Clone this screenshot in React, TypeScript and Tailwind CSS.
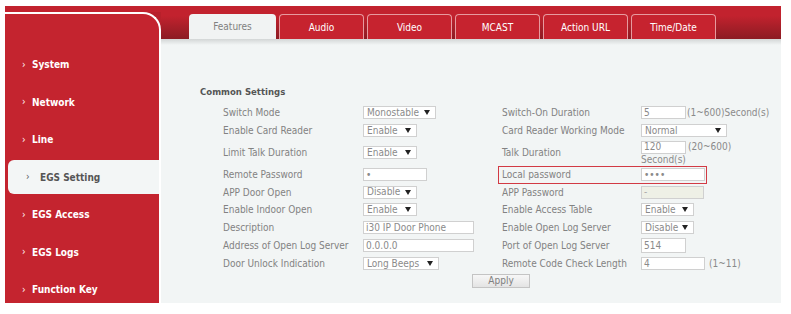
import React from 'react';

const font = "font-['DejaVu_Sans_Condensed','Liberation_Sans',sans-serif]";

const navItems = ['System', 'Network', 'Line', 'EGS Setting', 'EGS Access', 'EGS Logs', 'Function Key'];
const tabs = ['Features', 'Audio', 'Video', 'MCAST', 'Action URL', 'Time/Date'];

function Caret() {
  return (
    <svg width="6" height="5" viewBox="0 0 6 5" className="shrink-0">
      <path d="M0 0h6L3 5z" fill="#222" />
    </svg>
  );
}

function Select({ text, w }: { text: string; w: string }) {
  return (
    <div className={`${w} h-[13px] bg-white border border-[#d0d0d0] flex items-center justify-between pl-[3px] pr-[5px] text-[#8a8a8a]`}>
      <span className="leading-none">{text}</span>
      <Caret />
    </div>
  );
}

function Input({ text, w, disabled }: { text: string; w: string; disabled?: boolean }) {
  return (
    <div
      className={`${w} h-[13px] border border-[#d0d0d0] flex items-center pl-[2px] leading-none ${
        disabled ? 'bg-[#eef0e6] text-[#aaa]' : 'bg-white text-[#8a8a8a]'
      }`}
    >
      {text}
    </div>
  );
}

type Row = {
  h: string;
  l: string;
  lc: React.ReactNode;
  r: string;
  rc: React.ReactNode;
  boxed?: boolean;
  top?: boolean;
};

const rows: Row[] = [
  {
    h: 'h-[18px]',
    l: 'Switch Mode',
    lc: <Select text="Monostable" w="w-[73px]" />,
    r: 'Switch-On Duration',
    rc: (
      <div className="flex items-center">
        <Input text="5" w="w-[45px]" />
        <span className="ml-[1px] text-[#8a8a8a]">(1~600)Second(s)</span>
      </div>
    ),
  },
  {
    h: 'h-[18px]',
    l: 'Enable Card Reader',
    lc: <Select text="Enable" w="w-[54px]" />,
    r: 'Card Reader Working Mode',
    rc: <Select text="Normal" w="w-[86px]" />,
  },
  {
    h: 'h-[26px]',
    l: 'Limit Talk Duration',
    lc: <Select text="Enable" w="w-[54px]" />,
    r: 'Talk Duration',
    top: true,
    rc: (
      <div className="flex flex-col pt-[1px]">
        <div className="flex items-center">
          <Input text="120" w="w-[45px]" />
          <span className="ml-[2px] text-[#8a8a8a] leading-none">(20~600)</span>
        </div>
        <span className="text-[#8a8a8a] leading-[12px]">Second(s)</span>
      </div>
    ),
  },
  {
    h: 'h-[18px]',
    l: 'Remote Password',
    lc: <Input text="•" w="w-[64px]" />,
    r: 'Local password',
    boxed: true,
    rc: <Input text="••••" w="w-[64px]" />,
  },
  {
    h: 'h-[17px]',
    l: 'APP Door Open',
    lc: <Select text="Disable" w="w-[54px]" />,
    r: 'APP Password',
    rc: <Input text="-" w="w-[63px]" disabled />,
  },
  {
    h: 'h-[18px]',
    l: 'Enable Indoor Open',
    lc: <Select text="Enable" w="w-[54px]" />,
    r: 'Enable Access Table',
    rc: <Select text="Enable" w="w-[53px]" />,
  },
  {
    h: 'h-[18px]',
    l: 'Description',
    lc: <Input text="i30 IP Door Phone" w="w-[111px]" />,
    r: 'Enable Open Log Server',
    rc: <Select text="Disable" w="w-[53px]" />,
  },
  {
    h: 'h-[18px]',
    l: 'Address of Open Log Server',
    lc: <Input text="0.0.0.0" w="w-[111px]" />,
    r: 'Port of Open Log Server',
    rc: <div className="w-[45px] h-[15px] bg-white border border-[#d0d0d0] flex items-center pl-[2px] text-[#8a8a8a] leading-none">514</div>,
  },
  {
    h: 'h-[18px]',
    l: 'Door Unlock Indication',
    lc: <Select text="Long Beeps" w="w-[76px]" />,
    r: 'Remote Code Check Length',
    rc: (
      <div className="flex items-center">
        <Input text="4" w="w-[64px]" />
        <span className="ml-[4px] text-[#8a8a8a]">(1~11)</span>
      </div>
    ),
  },
];

export default function App() {
  return (
    <div className={`w-[791px] h-[314px] bg-white pt-[6px] pl-[5px] ${font}`}>
      <div className="flex w-[776px] h-[297px] bg-[#b8202b]">
        {/* Sidebar */}
        <div className="w-[156px] flex flex-col">
          <div className="h-[6px] bg-[#c2222e]" />
          <div className="flex-1 bg-[#c4242f] border-t-2 border-r-2 border-white rounded-tr-[18px] overflow-hidden pt-[32px]">
            {navItems.map((item) => {
              const active = item === 'EGS Setting';
              return (
                <div key={item} className="h-[37.5px] flex items-center">
                  {active ? (
                    <div className="ml-[3px] flex-1 h-[34px] bg-[#f3f6f6] rounded-l-[6px] flex items-center pl-[18px] text-[#555]">
                      <span className="w-[14px] text-[10px] leading-none">›</span>
                      <span className="font-bold text-[10px]">{item}</span>
                    </div>
                  ) : (
                    <div className="flex items-center pl-[17px] text-white">
                      <span className="w-[10px] text-[10px] leading-none">›</span>
                      <span className="font-bold text-[10px]">{item}</span>
                    </div>
                  )}
                </div>
              );
            })}
          </div>
        </div>

        {/* Main */}
        <div className="flex-1 flex flex-col">
          <div className="h-[33px] bg-gradient-to-b from-[#c2222e] from-[30%] to-[#8c1b23] flex items-end pl-[28px] gap-[3px]">
            {tabs.map((t, i) =>
              i === 0 ? (
                <div key={t} className="w-[87px] h-[25px] bg-[#f1f3f3] rounded-t-[4px] flex items-center justify-center text-[10px] text-[#808080]">
                  {t}
                </div>
              ) : (
                <div key={t} className="w-[85px] h-[25px] bg-[#c6232f] border border-b-0 border-[#e79a9f] rounded-t-[4px] flex items-center justify-center text-[10px] text-white">
                  {t}
                </div>
              )
            )}
          </div>

          <div className="flex-1 bg-[#f2f5f5] flex flex-col text-[10px]">
            <div className="h-[6px] bg-gradient-to-b from-[#d3d6d6] to-[#f2f5f5]" />
            <div className="pl-[39px] pt-[41px] h-[58.5px] font-bold text-[#555] text-[9.5px] leading-[12px]">Common Settings</div>
            <div className="flex flex-col">
              {rows.map((r) => (
                <div key={r.l} className={`flex ${r.h} ${r.top ? 'items-start' : 'items-center'}`}>
                  <div className={`pl-[62px] w-[202px] text-[#828282] ${r.top ? 'self-center' : ''}`}>{r.l}</div>
                  <div className={`w-[139px] ${r.top ? 'self-center' : ''}`}>{r.lc}</div>
                  {r.boxed ? (
                    <div className="ml-[-4px] w-[209px] h-[18px] border border-[#d23a44] flex items-center">
                      <div className="w-[142px] pl-[3px] text-[#828282]">{r.r}</div>
                      {r.rc}
                    </div>
                  ) : (
                    <>
                      <div className={`w-[139px] text-[#828282] ${r.top ? 'self-center' : ''}`}>{r.r}</div>
                      {r.rc}
                    </>
                  )}
                </div>
              ))}
            </div>
            <div className="pl-[311px] pt-[1px]">
              <div className="w-[58px] h-[14px] border border-[#c4c4c4] bg-gradient-to-b from-[#f7f7f7] to-[#e4e4e4] flex items-center justify-center text-[#808080] leading-none">
                Apply
              </div>
            </div>
          </div>
        </div>
      </div>
    </div>
  );
}
